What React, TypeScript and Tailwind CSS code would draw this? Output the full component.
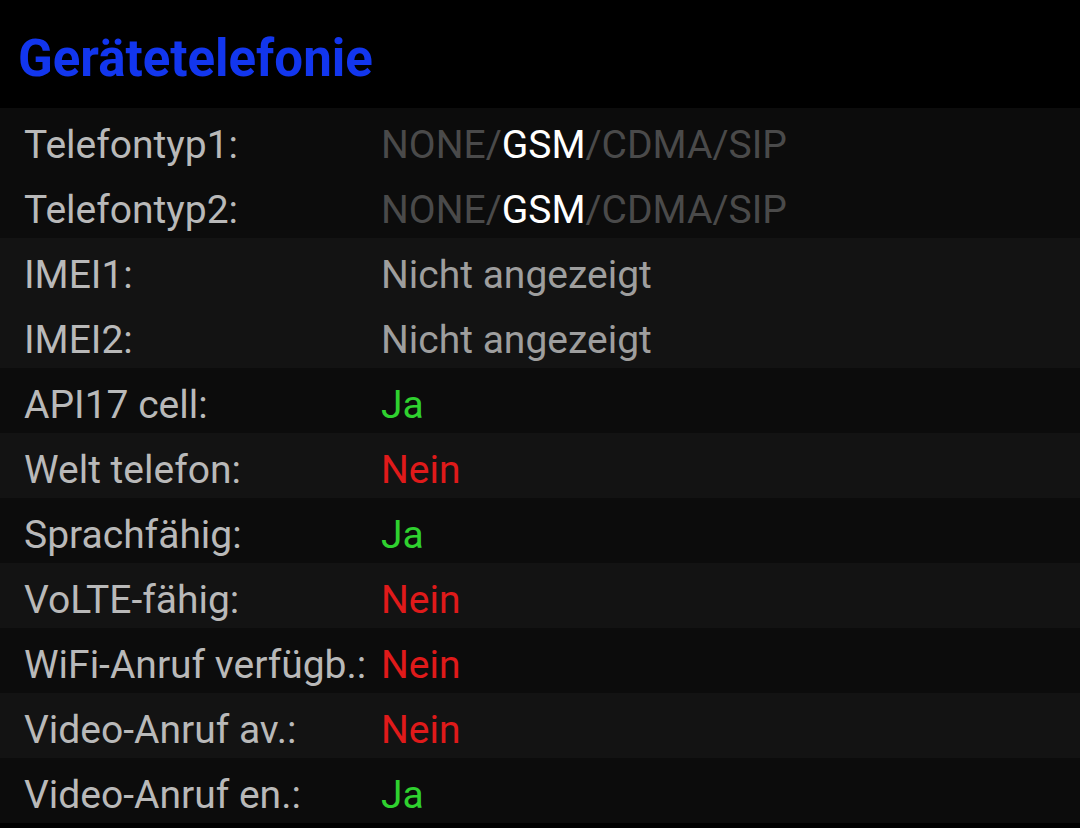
import React from "react";

type Row = { label: string; value: React.ReactNode };

const gray = "text-[#9e9e9e]";

const rows: Row[] = [
  {
    label: "Telefontyp1:",
    value: (
      <span className="text-[#4a4a4a]">
        NONE/<span className="text-white">GSM</span>/CDMA/SIP
      </span>
    ),
  },
  {
    label: "Telefontyp2:",
    value: (
      <span className="text-[#4a4a4a]">
        NONE/<span className="text-white">GSM</span>/CDMA/SIP
      </span>
    ),
  },
  { label: "IMEI1:", value: <span className={gray}>Nicht angezeigt</span> },
  { label: "IMEI2:", value: <span className={gray}>Nicht angezeigt</span> },
  { label: "API17 cell:", value: <span className="text-[#2fd12f]">Ja</span> },
  { label: "Welt telefon:", value: <span className="text-[#e01a1a]">Nein</span> },
  { label: "Sprachfähig:", value: <span className="text-[#2fd12f]">Ja</span> },
  { label: "VoLTE-fähig:", value: <span className="text-[#e01a1a]">Nein</span> },
  { label: "WiFi-Anruf verfügb.:", value: <span className="text-[#e01a1a]">Nein</span> },
  { label: "Video-Anruf av.:", value: <span className="text-[#e01a1a]">Nein</span> },
  { label: "Video-Anruf en.:", value: <span className="text-[#2fd12f]">Ja</span> },
];

const bgs = [
  "bg-[#0c0c0c]",
  "bg-[#0c0c0c]",
  "bg-[#131313]",
  "bg-[#131313]",
  "bg-[#0c0c0c]",
  "bg-[#131313]",
  "bg-[#0c0c0c]",
  "bg-[#131313]",
  "bg-[#0c0c0c]",
  "bg-[#131313]",
  "bg-[#0c0c0c]",
];

export default function App() {
  return (
    <div
      className="w-[1080px] h-[828px] bg-black overflow-hidden"
      style={{ fontFamily: "Roboto, 'Noto Sans', sans-serif" }}
    >
      <div className="h-[108px] pl-[18px] pt-[29px]">
        <h1 className="text-[51px] leading-[60px] font-bold text-[#1236ee]">
          Gerätetelefonie
        </h1>
      </div>
      <div className="flex flex-col">
        {rows.map((r, i) => (
          <div
            key={i}
            className={`flex h-[65px] pt-[9px] text-[39px] leading-[56px] ${bgs[i]}`}
          >
            <div className="w-[381px] pl-[24px] text-[#b9b9b9] whitespace-nowrap">
              {r.label}
            </div>
            <div className="whitespace-nowrap">{r.value}</div>
          </div>
        ))}
      </div>
    </div>
  );
}
